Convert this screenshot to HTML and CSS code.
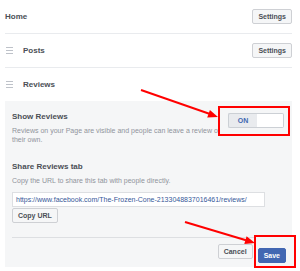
FILE: index.html
```html
<!DOCTYPE html>
<html>
<head>
<meta charset="utf-8">
<link rel="stylesheet" href="styles.css">
</head>
<body>
<div class="page">
  <div class="row">
    <span class="row-title">Home</span>
    <button class="btn">Settings</button>
  </div>
  <div class="row">
    <span class="handle"></span>
    <span class="row-title">Posts</span>
    <button class="btn">Settings</button>
  </div>
  <div class="row row-open">
    <span class="handle"></span>
    <span class="row-title">Reviews</span>
  </div>
  <div class="panel">
    <div class="setting">
      <div class="setting-text">
        <div class="setting-title">Show Reviews</div>
        <div class="setting-desc">Reviews on your Page are visible and people can leave a review of their own.</div>
      </div>
      <div class="callout callout-toggle">
        <div class="toggle"><span class="toggle-on">ON</span><span class="toggle-off"></span></div>
      </div>
    </div>
    <div class="share">
      <div class="setting-title">Share Reviews tab</div>
      <div class="setting-desc">Copy the URL to share this tab with people directly.</div>
      <div class="url-input">https://www.facebook.com/The-Frozen-Cone-2133048837016461/reviews/</div>
      <button class="btn btn-copy">Copy URL</button>
    </div>
    <div class="actions">
      <button class="btn">Cancel</button>
      <div class="callout callout-save">
        <button class="btn btn-primary">Save</button>
      </div>
    </div>
  </div>
  <svg class="annotations" width="300" height="271" viewBox="0 0 300 271">
    <line x1="141" y1="90" x2="210" y2="114" stroke="#f00" stroke-width="2"/>
    <polygon points="218,117 207.2,117.5 209.9,109.9" fill="#f00"/>
    <line x1="185" y1="222" x2="246" y2="240.3" stroke="#f00" stroke-width="2"/>
    <polygon points="255,243 244.3,243.9 246.6,236.3" fill="#f00"/>
  </svg>
</div>
</body>
</html>
```

FILE: styles.css
```css
* { box-sizing: border-box; }
html, body { margin: 0; padding: 0; background: #fff; }
body {
  font-family: "Liberation Sans", Arial, sans-serif;
  color: #4b4f56;
  width: 300px;
  height: 271px;
  overflow: hidden;
  position: relative;
}
.page {
  width: 287px;
  margin-left: 5px;
}
.row {
  display: flex;
  align-items: center;
  height: 34px;
  border-bottom: 1px solid #e9ebee;
}
.row-open { border-bottom: none; height: 33px; }
.row-title {
  font-size: 8px;
  font-weight: bold;
  line-height: 10px;
  color: #4b4f56;
  flex: 1;
}
.handle {
  width: 7px;
  height: 1px;
  margin-left: 1px;
  margin-right: 10px;
  background: #bec2c9;
  box-shadow: 0 -3px 0 #bec2c9, 0 3px 0 #bec2c9;
}
.btn {
  font-family: "Liberation Sans", Arial, sans-serif;
  font-size: 7px;
  font-weight: bold;
  line-height: 13px;
  height: 15px;
  padding: 0 5px;
  border: 1px solid #ced0d4;
  border-radius: 2px;
  background: #f5f6f7;
  color: #4b4f56;
  margin: 0;
  white-space: nowrap;
}
.btn-primary {
  background: #4267b2;
  border-color: #4267b2;
  color: #fff;
}
.panel {
  background: #f5f6f7;
  height: 166px;
  padding: 11px 8px 8px 7px;
}
.setting {
  display: flex;
  align-items: flex-start;
}
.setting-text { flex: 1; min-width: 0; }
.setting-title {
  font-size: 8px;
  font-weight: bold;
  line-height: 10px;
  color: #4b4f56;
}
.setting-desc {
  font-size: 7px;
  line-height: 9px;
  color: #90949c;
  margin-top: 4px;
}
.callout {
  border: 2px solid #f00;
  background: #f5f6f7;
}
.callout-toggle {
  margin: -6px -6px 0 -10px;
  padding: 5px 4px 6px 8px;
}
.toggle {
  display: flex;
  width: 56px;
  height: 15px;
}
.toggle-on {
  width: 29px;
  background: #e9ebee;
  border: 1px solid #ccd0d5;
  border-right: none;
  border-radius: 2px 0 0 2px;
  color: #4267b2;
  font-size: 7px;
  font-weight: bold;
  line-height: 13px;
  text-align: center;
}
.toggle-off {
  flex: 1;
  background: #fff;
  border: 1px solid #ccd0d5;
  border-left: none;
  border-radius: 0 2px 2px 0;
}
.share {
  margin-top: 18px;
  padding-bottom: 14px;
  border-bottom: 1px solid #dddfe2;
}
.url-input {
  margin-top: 7px;
  width: 253px;
  height: 15px;
  border: 1px solid #dddfe2;
  background: #fff;
  padding-left: 3px;
  font-size: 7px;
  line-height: 13px;
  color: #365899;
  white-space: nowrap;
  overflow: hidden;
}
.btn-copy {
  display: block;
  margin-top: 1px;
  height: 15px;
}
.actions {
  display: flex;
  justify-content: flex-end;
  align-items: flex-start;
  padding-top: 6px;
  margin-right: -1px;
}
.callout-save {
  margin: -9px -11px -5px 1px;
  padding: 7px 8px 3px 2px;
}
.annotations {
  position: absolute;
  left: 0;
  top: 0;
  pointer-events: none;
}
```
